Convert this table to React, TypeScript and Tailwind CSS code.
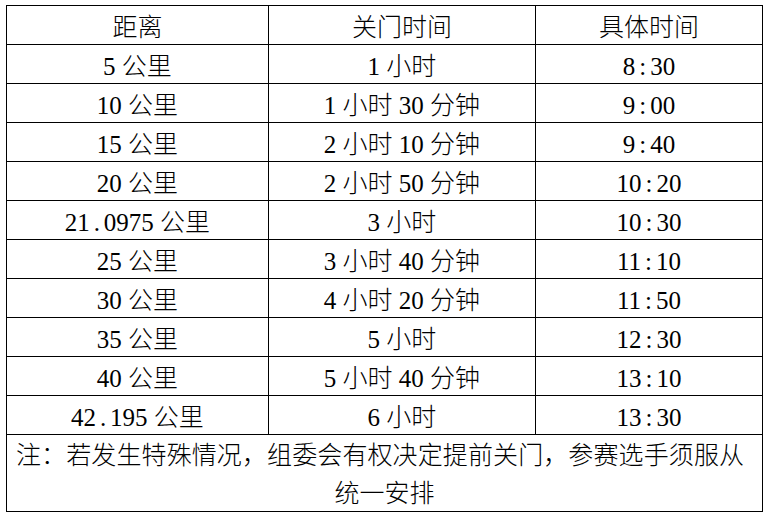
import React from "react";

const rows: [string, string, string][] = [
  ["5 公里", "1 小时", "8:30"],
  ["10 公里", "1 小时 30 分钟", "9:00"],
  ["15 公里", "2 小时 10 分钟", "9:40"],
  ["20 公里", "2 小时 50 分钟", "10:20"],
  ["21.0975 公里", "3 小时", "10:30"],
  ["25 公里", "3 小时 40 分钟", "11:10"],
  ["30 公里", "4 小时 20 分钟", "11:50"],
  ["35 公里", "5 小时", "12:30"],
  ["40 公里", "5 小时 40 分钟", "13:10"],
  ["42.195 公里", "6 小时", "13:30"],
];

function Txt({ s }: { s: string }) {
  const parts: React.ReactNode[] = [];
  let buf = "";
  let k = 0;
  for (const ch of s) {
    if (ch === "." || ch === ":") {
      if (buf) parts.push(<span key={k++}>{buf}</span>);
      buf = "";
      parts.push(
        <span
          key={k++}
          className={
            ch === "." ? "inline-block w-[14px] text-center" : "inline-block w-[15px] text-center"
          }
        >
          {ch}
        </span>
      );
    } else {
      buf += ch;
    }
  }
  if (buf) parts.push(<span key={k++}>{buf}</span>);
  return <span className="whitespace-pre">{parts}</span>;
}

function Cell({ s, w }: { s: string; w: string }) {
  return (
    <div
      className={`${w} h-[39px] border-r border-b border-black flex items-center justify-center pt-[5px]`}
    >
      <Txt s={s} />
    </div>
  );
}

export default function App() {
  return (
    <div className="w-[769px] h-[517px] bg-white pt-[5px] pl-[6px] text-black">
      <div
        className="w-[757px] border-l border-t border-black text-[25px] leading-none font-light"
        style={{ fontFamily: '"Liberation Serif", "Noto Sans CJK SC", serif' }}
      >
        <div className="flex">
          <Cell s="距离" w="w-[262px]" />
          <Cell s="关门时间" w="w-[267px]" />
          <Cell s="具体时间" w="w-[227px]" />
        </div>
        {rows.map((r, i) => (
          <div key={i} className="flex">
            <Cell s={r[0]} w="w-[262px]" />
            <Cell s={r[1]} w="w-[267px]" />
            <Cell s={r[2]} w="w-[227px]" />
          </div>
        ))}
        <div className="w-[756px] h-[77px] border-r border-b border-black pl-[9px] pr-[18px] pt-[2px]">
          <p className="leading-[38px] whitespace-nowrap text-justify [text-align-last:justify]">
            注：若发生特殊情况，组委会有权决定提前关门，参赛选手须服从
          </p>
          <p className="leading-[38px] text-center pl-[9px]">统一安排</p>
        </div>
      </div>
    </div>
  );
}
